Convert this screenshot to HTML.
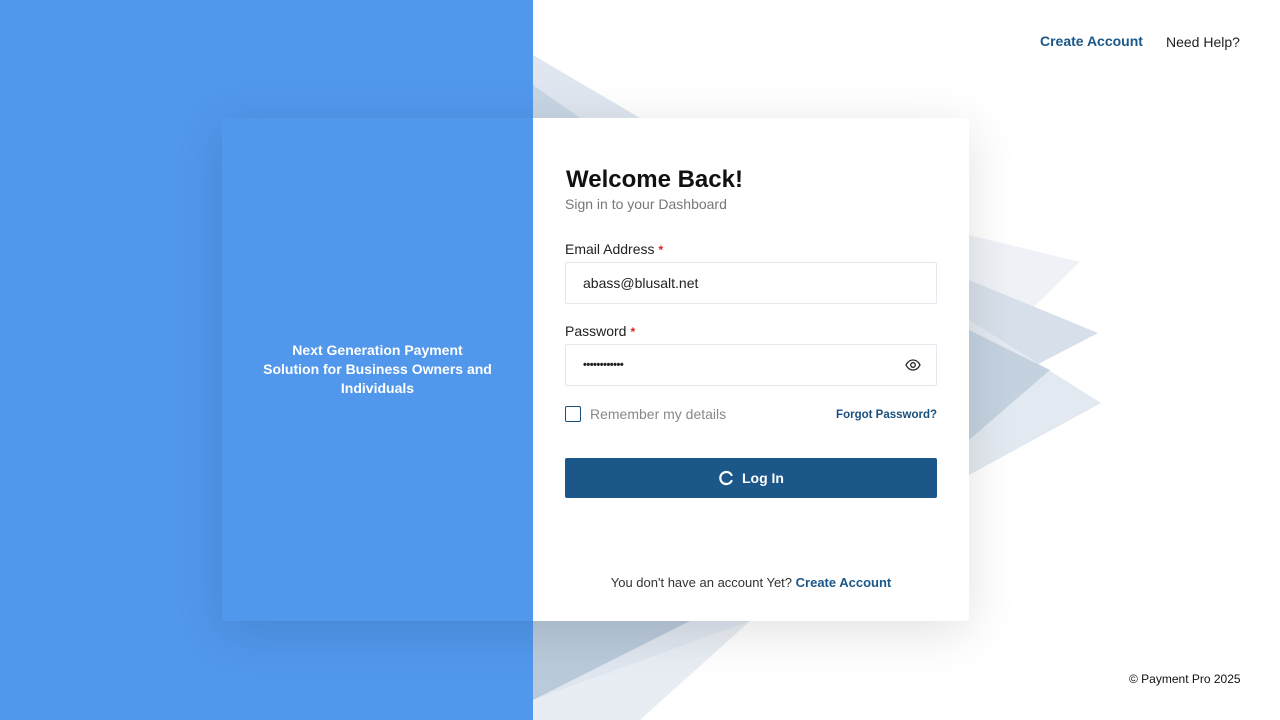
<!DOCTYPE html>
<html><head><meta charset="utf-8"><style>
*{box-sizing:border-box;margin:0;padding:0}
body{width:1280px;height:720px;overflow:hidden;position:relative;background:#fff;font-family:"Liberation Sans",sans-serif}
.left{position:absolute;left:0;top:0;width:533px;height:720px;background:#5197ec}
svg.bg{position:absolute;left:0;top:0}
.card{position:absolute;left:222px;top:118px;width:747px;height:503px;border-radius:4px;box-shadow:0 10px 50px rgba(0,0,0,.12);overflow:hidden;display:flex}
.cl{width:311px;background:#5197ec;color:#fff;font-weight:bold;font-size:14px;text-align:center;display:flex;align-items:center;justify-content:center;line-height:19px;padding:0 10px;white-space:nowrap}
.cr{flex:1;background:#fff;position:relative}
.abs{position:absolute}
h1{font-size:24px;color:#111;font-weight:bold}
.lbl{font-size:14px;color:#222}
.req{color:#e02020;font-size:12px;margin-left:4px;font-weight:bold}
.inp{position:absolute;left:32px;width:372px;height:42px;border:1px solid #e6e6ee;border-radius:2px;font-size:14px;color:#222;padding-left:17px;line-height:40px}
.btn{position:absolute;left:32px;top:340px;width:372px;height:40px;background:#1b5889;border-radius:2px;color:#fff;font-weight:bold;font-size:14px;display:flex;align-items:center;justify-content:center}
a{color:#1b4f7e;text-decoration:none}
</style></head><body>
<div class="left"></div>
<svg class="bg" width="1280" height="720">
<polygon points="533,55 640,118 533,118" fill="#dfe6ef"/>
<polygon points="533,85 580,118 533,118" fill="#c8d5e3"/>
<polygon points="969,235 1080,262 969,370" fill="#eef2f7"/>
<polygon points="969,280 1098,333 969,400" fill="#d7e0ea"/>
<polygon points="969,320 1101,403 969,475" fill="#e3e9f0"/>
<polygon points="969,330 1050,370 969,440" fill="#c4d2e0"/>
<polygon points="533,621 750,621 533,720" fill="#dfe6ef"/>
<polygon points="533,621 690,621 533,700" fill="#b9cadb"/>
<polygon points="750,621 640,720 533,720 533,700" fill="#e8edf3"/>
</svg>
<a class="abs" style="left:1040px;top:33px;font-size:14px;font-weight:bold;color:#1b5889">Create Account</a>
<div class="abs" style="left:1166px;top:34px;font-size:14px;color:#222">Need Help?</div>
<div class="abs" style="left:1129px;top:672px;font-size:12px;color:#111">© Payment Pro 2025</div>
<div class="card">
<div class="cl">Next Generation Payment<br>Solution for Business Owners and<br>Individuals</div>
<div class="cr">
<h1 class="abs" style="left:33px;top:48px">Welcome Back!</h1>
<div class="abs" style="left:32px;top:78px;font-size:14px;color:#777">Sign in to your Dashboard</div>
<div class="abs lbl" style="left:32px;top:123px">Email Address<span class="req">*</span></div>
<div class="inp" style="top:144px">abass@blusalt.net</div>
<div class="abs lbl" style="left:32px;top:205px">Password<span class="req">*</span></div>
<div class="inp" style="top:226px;font-size:11px;font-weight:bold;letter-spacing:-0.5px">••••••••••••
<svg class="abs" style="right:15px;top:13px" width="16" height="14" viewBox="0 0 16 14"><path d="M1 7C3 3 5.5 2 8 2s5 1 7 5c-2 4-4.5 5-7 5S3 11 1 7z" fill="none" stroke="#222" stroke-width="1.3"/><circle cx="8" cy="7" r="2.3" fill="none" stroke="#222" stroke-width="1.3"/></svg></div>
<div class="abs" style="left:32px;top:288px;width:16px;height:16px;border:1.5px solid #1b4f7e;border-radius:2px"></div>
<div class="abs" style="left:57px;top:288px;font-size:14px;color:#888">Remember my details</div>
<a class="abs" style="right:32px;top:291px;font-size:11.5px;font-weight:bold">Forgot Password?</a>
<div class="btn"><svg width="16" height="16" viewBox="0 0 16 16" style="margin-right:8px"><path d="M13.5 5A6 6 0 1 0 13.5 11" fill="none" stroke="#fff" stroke-width="2.2" stroke-linecap="round"/></svg>Log In</div>
<div class="abs" style="left:0;width:436px;top:457px;text-align:center;font-size:13px;color:#333">You don't have an account Yet? <a style="font-weight:bold;color:#1b5889">Create Account</a></div>
</div></div>
</body></html>
